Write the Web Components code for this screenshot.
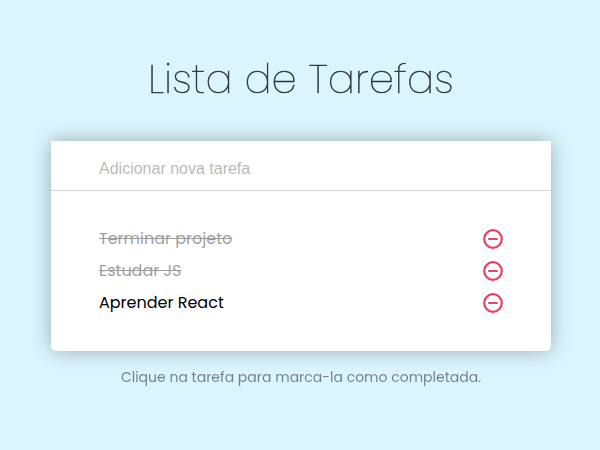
<!DOCTYPE html>
<html lang="pt-BR">
<head>
<meta charset="utf-8">
<title>Lista de Tarefas</title>
<style>
html,body{margin:0;height:100%;overflow:hidden;background:#dbf5ff}
body{font-family:Poppins,Inter,"Open Sans",sans-serif}
</style>
</head>
<body>
<todo-app></todo-app>
<script>
const define = (name, html) => customElements.define(name, class extends HTMLElement {
  constructor() {
    super();
    this.attachShadow({ mode: 'open' }).innerHTML = html;
  }
});

define('remove-button', `
<style>
:host{display:block;width:20px;height:20px;cursor:pointer}
svg{display:block}
</style>
<svg width="20" height="20" viewBox="0 0 20 20" fill="none" stroke="#e83e60" role="img" aria-label="Remover">
  <circle cx="10" cy="10" r="8.8" stroke-width="2.2"/>
  <path d="M5.2 10h9.6" stroke-width="1.9"/>
</svg>`);

define('todo-item', `
<style>
:host{display:flex;align-items:center;justify-content:space-between;height:32px;font-size:16px;line-height:32px;color:#000}
:host([done]) span{text-decoration:line-through;opacity:.38}
</style>
<span><slot></slot></span><remove-button></remove-button>`);

define('todo-input', `
<style>
:host{display:flex;height:49px;padding:0 48px;border-bottom:1px solid #d5d5d5}
input{flex:1;min-width:0;border:0;outline:0;padding:6px 0 0;margin:0;background:none;font:16px "Liberation Sans",Arial,sans-serif}
input::placeholder{color:#000;opacity:.28}
</style>
<input placeholder="Adicionar nova tarefa">`);

define('todo-card', `
<style>
:host{display:block;width:500px;height:210px;background:#fff;border-radius:0 0 5px 5px;box-shadow:0 0 20px rgba(0,0,0,.3)}
section{padding:32px 48px 0}
</style>
<slot name="input"></slot><section><slot></slot></section>`);

define('todo-app', `
<style>
:host{display:flex;flex-direction:column;align-items:center;height:450px;padding-left:2px;box-sizing:border-box}
h1{margin:48px 0 0;height:93px;line-height:62px;font-size:40px;font-weight:200;letter-spacing:.26px;-webkit-text-stroke:.55px #000;opacity:.8;will-change:opacity;white-space:nowrap}
p{margin:14px 0 0;line-height:24px;font-size:14px;font-weight:400;opacity:.48;will-change:opacity;white-space:nowrap}
</style>
<h1>Lista de Tarefas</h1>
<todo-card>
  <todo-input slot="input"></todo-input>
  <todo-item done>Terminar projeto</todo-item>
  <todo-item done>Estudar JS</todo-item>
  <todo-item>Aprender React</todo-item>
</todo-card>
<p>Clique na tarefa para marca-la como completada.</p>`);
</script>
</body>
</html>
